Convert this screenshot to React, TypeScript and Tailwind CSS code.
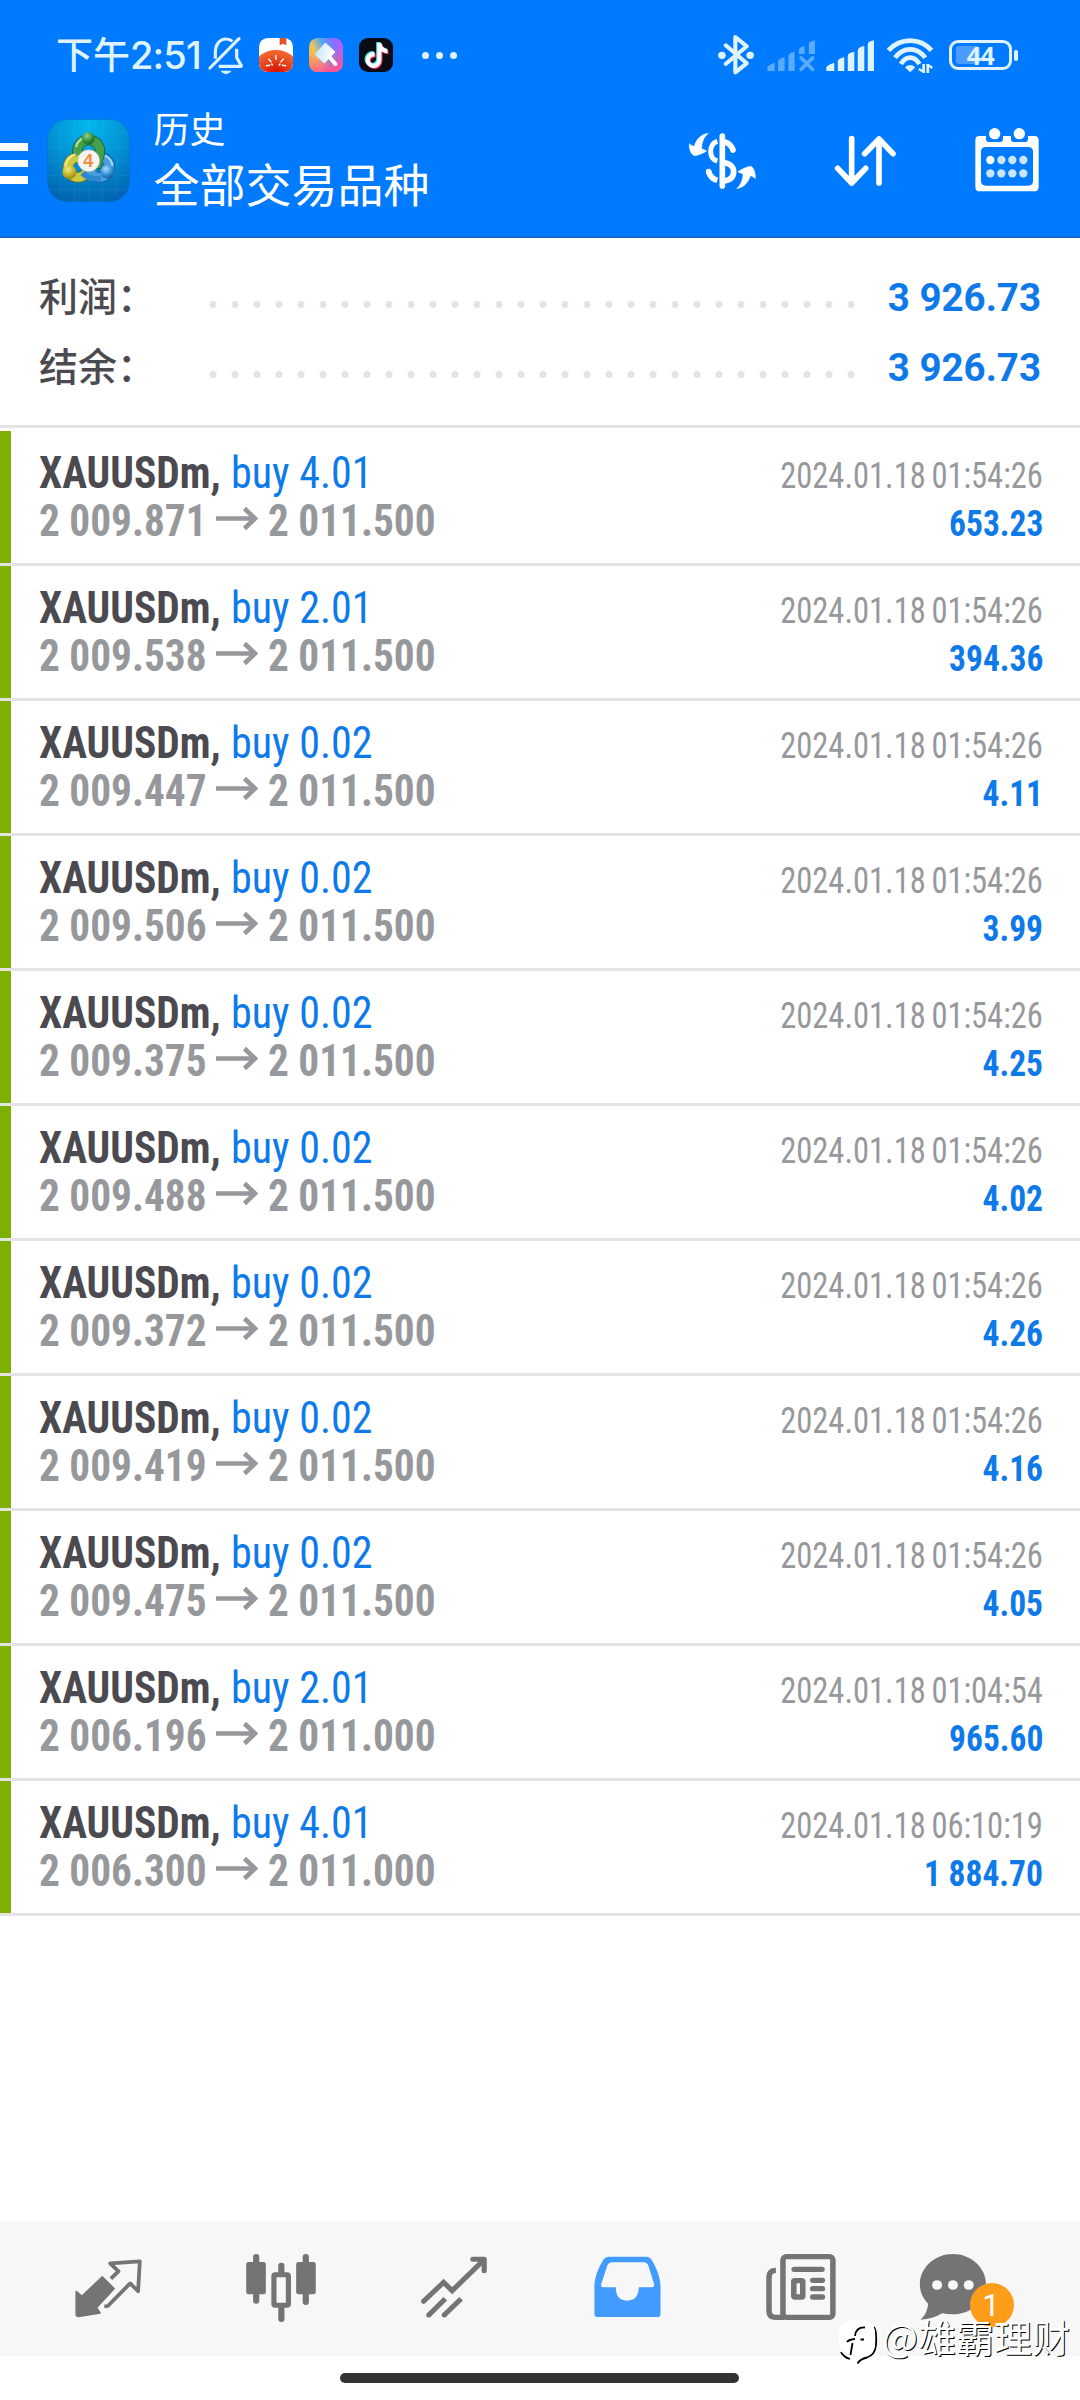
import { FaTiktok } from "react-icons/fa";

type Deal = { lots: string; open: string; close: string; time: string; profit: string };

const deals: Deal[] = [
  { lots: "4.01", open: "2 009.871", close: "2 011.500", time: "2024.01.18 01:54:26", profit: "653.23" },
  { lots: "2.01", open: "2 009.538", close: "2 011.500", time: "2024.01.18 01:54:26", profit: "394.36" },
  { lots: "0.02", open: "2 009.447", close: "2 011.500", time: "2024.01.18 01:54:26", profit: "4.11" },
  { lots: "0.02", open: "2 009.506", close: "2 011.500", time: "2024.01.18 01:54:26", profit: "3.99" },
  { lots: "0.02", open: "2 009.375", close: "2 011.500", time: "2024.01.18 01:54:26", profit: "4.25" },
  { lots: "0.02", open: "2 009.488", close: "2 011.500", time: "2024.01.18 01:54:26", profit: "4.02" },
  { lots: "0.02", open: "2 009.372", close: "2 011.500", time: "2024.01.18 01:54:26", profit: "4.26" },
  { lots: "0.02", open: "2 009.419", close: "2 011.500", time: "2024.01.18 01:54:26", profit: "4.16" },
  { lots: "0.02", open: "2 009.475", close: "2 011.500", time: "2024.01.18 01:54:26", profit: "4.05" },
  { lots: "2.01", open: "2 006.196", close: "2 011.000", time: "2024.01.18 01:04:54", profit: "965.60" },
  { lots: "4.01", open: "2 006.300", close: "2 011.000", time: "2024.01.18 06:10:19", profit: "1 884.70" },
];

const ICE = "#dff3ff";

function BellOff() {
  return (
    <svg className="ml-[8px] mt-[30px] h-[50px] w-[38px]" viewBox="22 15 114 150" fill="none" stroke={ICE} strokeWidth="9.5">
      <path d="M47 101V82C47 59 60 42 79 42C86 42 93 44 98 49" />
      <path d="M111 71V98L124 120Q127 124 122 124H57" />
      <path d="M118 41L31 129" strokeLinecap="round" />
      <path d="M62 137H96Q79 158 62 137Z" fill={ICE} stroke="none" />
    </svg>
  );
}

function TomatoApp() {
  return (
    <svg className="ml-[14px] mt-[38px] size-[34px]" viewBox="177 39 102 102">
      <defs>
        <clipPath id="tomatoClip"><rect x="177" y="39" width="102" height="102" rx="26" /></clipPath>
        <radialGradient id="tomatoFill" cx="0.5" cy="0.7" r="0.6">
          <stop offset="0" stopColor="#d80f04" />
          <stop offset="1" stopColor="#f0622a" />
        </radialGradient>
      </defs>
      <g clipPath="url(#tomatoClip)">
        <rect x="177" y="39" width="102" height="102" fill="#fff" />
        <ellipse cx="228" cy="122" rx="62" ry="47" fill="url(#tomatoFill)" />
        <path d="M239 39H259V61L249 56L239 61Z" fill="#e2502e" />
      </g>
      <g stroke="#fff" strokeWidth="4.5" strokeLinecap="round">
        <path d="M199 122L209 121M206 102L213 110M227 92L228 103M250 102L243 110M257 122L247 121M215 117L217 120M240 117L238 120" />
      </g>
    </svg>
  );
}

function BrushApp() {
  return (
    <svg className="ml-[16px] mt-[38px] size-[34px]" viewBox="327 39 102 102">
      <defs>
        <linearGradient id="brushBase" x1="0" y1="0.6" x2="1" y2="0.2">
          <stop offset="0" stopColor="#ffb12e" />
          <stop offset="0.22" stopColor="#e8c45c" />
          <stop offset="0.5" stopColor="#4aa8fb" />
          <stop offset="0.8" stopColor="#8a6cff" />
          <stop offset="1" stopColor="#c05cff" />
        </linearGradient>
        <linearGradient id="brushGlow" x1="0.4" y1="0.35" x2="0.6" y2="1">
          <stop offset="0" stopColor="#ff5aa0" stopOpacity="0" />
          <stop offset="1" stopColor="#ff4f94" />
        </linearGradient>
        <linearGradient id="brushHead" x1="0" y1="0" x2="1" y2="0.2">
          <stop offset="0" stopColor="#bfe3ff" />
          <stop offset="1" stopColor="#fff" />
        </linearGradient>
      </defs>
      <rect x="327" y="39" width="102" height="102" rx="26" fill="url(#brushBase)" />
      <rect x="327" y="39" width="102" height="102" rx="26" fill="url(#brushGlow)" />
      <path d="M376 54L405 81L373 114L345 88Z" fill="url(#brushHead)" stroke="url(#brushHead)" strokeWidth="3" strokeLinejoin="round" />
      <path d="M388 95L406 117" stroke="#fff" strokeWidth="12" strokeLinecap="round" />
    </svg>
  );
}

function TiktokApp() {
  return (
    <div className="relative ml-[16px] mt-[38px] size-[34px] rounded-[9px] bg-[#0b0b16]">
      <FaTiktok className="absolute left-[5px] top-[4px] h-[25px] w-[23px] text-[#2fe6e0]" />
      <FaTiktok className="absolute left-[7px] top-[6px] h-[25px] w-[23px] text-[#fb3357]" />
      <FaTiktok className="absolute left-[6px] top-[5px] h-[25px] w-[23px] text-white" />
    </div>
  );
}

function Bluetooth() {
  return (
    <svg className="mt-[30px] h-[50px] w-[40px]" viewBox="508 90 116 150" preserveAspectRatio="none">
      <path d="M539 136L600 190L567 217V111L600 139L539 192" fill="none" stroke={ICE} strokeWidth="12" strokeLinecap="round" strokeLinejoin="round" />
      <circle cx="528" cy="166" r="11" fill={ICE} />
      <circle cx="610" cy="166" r="11" fill={ICE} />
    </svg>
  );
}

function SignalOff() {
  return (
    <svg className="ml-[11px] mt-[30px] h-[50px] w-[50px]" viewBox="656 90 145 150" preserveAspectRatio="none" fill="#5aabff">
      <path d="M660 213V202Q660 196 681 188V213Z" />
      <path d="M691 213V184Q691 176 710 172V213Z" />
      <path d="M721 213V168Q721 158 739 155V213Z" />
      <path d="M751 162V152Q751 142 768 138V162Z" />
      <path d="M780 162V134Q780 124 798 121V162Z" />
      <path d="M758 174L791 208M791 174L758 208" stroke="#5aabff" strokeWidth="11" strokeLinecap="round" />
    </svg>
  );
}

function Signal() {
  return (
    <svg className="ml-[9px] mt-[30px] h-[50px] w-[50px]" viewBox="830 90 145 150" preserveAspectRatio="none" fill={ICE}>
      <path d="M834 213V202Q834 196 857 188V213Z" />
      <path d="M867 213V184Q867 176 886 172V213Z" />
      <path d="M896 213V168Q896 158 915 155V213Z" />
      <path d="M925 213V152Q925 142 944 138V213Z" />
      <path d="M954 213V134Q954 124 972 121V213Z" />
    </svg>
  );
}

function Wifi() {
  return (
    <svg className="ml-[11px] mt-[30px] h-[50px] w-[48px]" viewBox="1007 90 139 150" preserveAspectRatio="none" fill="none" stroke={ICE} strokeWidth="14">
      <path d="M1014 151Q1041 122 1077 122T1139 151" />
      <path d="M1033 173Q1052 148 1077 148T1121 173" />
      <path d="M1050 192Q1062 173 1077 173T1104 192" />
      <path d="M1062 202Q1077 188 1092 202L1077 217Z" fill={ICE} stroke="none" />
      <path d="M1116 192V219M1128 192V219" strokeWidth="8" />
      <path d="M1102 207L1113 214M1131 196L1141 204" strokeWidth="7" />
    </svg>
  );
}

function Battery() {
  return (
    <div className="ml-[15px] mt-[40px] flex">
      <div className="relative flex h-[30px] w-[63px] items-center rounded-[9px] border-[3px] border-[#dff3ff]">
        <div className="absolute left-[4px] top-[3px] h-[18px] w-[24px] rounded-[3px] bg-[#4a9dff]" />
        <span className="relative w-full text-center font-['Open_Sans'] text-[25px] font-bold leading-[24px] tracking-[-0.5px] text-[#dff3ff]">44</span>
      </div>
      <div className="ml-[2px] mt-[10px] h-[11px] w-[4px] rounded-[2px] bg-[#dff3ff]" />
    </div>
  );
}

function StatusBar() {
  return (
    <div className="flex h-[100px] items-start pl-[56px] pr-[62px]">
      <span className="font-['Noto_Sans_CJK_SC',sans-serif] text-[37px] font-medium leading-[106px] text-[#dff3ff]">下午</span>
      <span className="w-[69px] whitespace-nowrap font-['Inter',sans-serif] text-[38px] font-medium leading-[111px] tracking-[-0.8px] text-[#dff3ff]">2:51</span>
      <BellOff />
      <TomatoApp />
      <BrushApp />
      <TiktokApp />
      <div className="ml-[29px] mt-[52px] flex gap-[7.5px]">
        <div className="size-[6.5px] rounded-full bg-[#dff3ff]" />
        <div className="size-[6.5px] rounded-full bg-[#dff3ff]" />
        <div className="size-[6.5px] rounded-full bg-[#dff3ff]" />
      </div>
      <div className="ml-auto flex">
        <Bluetooth />
        <SignalOff />
        <Signal />
        <Wifi />
        <Battery />
      </div>
    </div>
  );
}

function AppLogo() {
  return (
    <svg className="ml-[19px] mt-[19px] size-[83px]" viewBox="50 28 249 249">
      <defs>
        <radialGradient id="logoBg" cx="0.5" cy="0.05" r="1">
          <stop offset="0" stopColor="#02b8ee" />
          <stop offset="0.5" stopColor="#0290d4" />
          <stop offset="1" stopColor="#0161b0" />
        </radialGradient>
        <radialGradient id="ballGreen" cx="0.4" cy="0.3" r="0.8"><stop offset="0" stopColor="#8fd287" /><stop offset="0.6" stopColor="#2d8a35" /><stop offset="1" stopColor="#165a20" /></radialGradient>
        <radialGradient id="ballYellow" cx="0.4" cy="0.3" r="0.8"><stop offset="0" stopColor="#f3ea86" /><stop offset="0.6" stopColor="#bfae22" /><stop offset="1" stopColor="#7d7410" /></radialGradient>
        <radialGradient id="ballBlue" cx="0.4" cy="0.3" r="0.8"><stop offset="0" stopColor="#a6dcff" /><stop offset="0.6" stopColor="#2c86cf" /><stop offset="1" stopColor="#0d4f93" /></radialGradient>
      </defs>
      <rect x="51" y="29" width="247" height="247" rx="60" fill="url(#logoBg)" stroke="#0a6cc8" strokeWidth="2" />
      <path d="M90 45V260M132 29V276M175 29V276M217 29V276M260 45V260M51 70H298M51 113H298M51 155H298M51 198H298M51 240H298" stroke="#fff" strokeOpacity="0.09" strokeWidth="2" />
      <g fill="none">
        <circle cx="143" cy="173" r="30" stroke="#6d7420" strokeWidth="32" />
        <circle cx="143" cy="173" r="30" stroke="#cdc93f" strokeWidth="27" />
        <circle cx="208" cy="173" r="30" stroke="#0d5a9c" strokeWidth="32" />
        <circle cx="208" cy="173" r="30" stroke="#459fdf" strokeWidth="27" />
        <path d="M143 136A34 34 0 1 1 207 136L196 176" stroke="#1d5f2a" strokeWidth="31" />
        <path d="M143 136A34 34 0 1 1 207 136L197 173" stroke="#46a04a" strokeWidth="26" />
        <path d="M137 112C140 98 150 88 162 85" stroke="#a9dba0" strokeWidth="7" />
        <path d="M105 170C108 152 120 138 136 134" stroke="#ece98e" strokeWidth="7" />
        <path d="M224 138C238 144 246 158 246 168" stroke="#a7d8f6" strokeWidth="6" />
        <path d="M156 190C172 206 192 210 212 205" stroke="#2f87cf" strokeWidth="16" />
      </g>
      <circle cx="174" cy="86" r="19" fill="url(#ballGreen)" />
      <circle cx="117" cy="187" r="21" fill="url(#ballYellow)" />
      <circle cx="231" cy="186" r="21" fill="url(#ballBlue)" />
      <circle cx="175" cy="153" r="33" fill="#f4f4f2" stroke="#a9b3a0" strokeWidth="2" />
      <text x="174" y="172" textAnchor="middle" className="font-['Liberation_Sans'] text-[54px] font-bold" fill="#f08c3c">4</text>
    </svg>
  );
}

function CurrencyIcon() {
  return (
    <svg className="mt-[20px] h-[90px] w-[71px]" viewBox="20 0 213 270" fill="none" stroke="#fff">
      <path d="M126 48V198" strokeWidth="17" strokeLinecap="round" />
      <path d="M111 64C97 68 91 80 91 95S98 119 111 123" strokeWidth="15" />
      <path d="M133 66C145 69 154 78 158 90" strokeWidth="17" strokeLinecap="round" />
      <path d="M111 181C98 178 90 170 85 156" strokeWidth="17" />
      <circle cx="85" cy="155" r="8.5" fill="#fff" stroke="none" />
      <path d="M131 128C149 130 160 140 160 155S149 180 131 183" strokeWidth="17" />
      <path d="M84 40C64 42 48 56 42 79C37 78 31 75 27 71C26 85 30 98 38 105Q43 109 50 106C60 103 70 99 79 93C74 90 70 88 64 86C64 68 70 52 84 40Z" fill="#fff" strokeWidth="1.5" />
      <path d="M169 206C190 202 204 188 210 167C216 168 221 171 225 176C226 162 222 149 216 142Q211 137 204 140C192 143 182 149 173 155C178 158 182 160 188 161C188 178 182 194 169 206Z" fill="#fff" strokeWidth="1.5" />
    </svg>
  );
}

function SortIcon() {
  return (
    <svg className="ml-[75px] mt-[20px] h-[90px] w-[65px]" viewBox="458 0 195 270" fill="none" stroke="#fff" strokeWidth="17" strokeLinecap="round" strokeLinejoin="round">
      <path d="M514 56V189M472 145L514 189L556 145" />
      <path d="M596 189V57M553 101L596 57L638 101" />
    </svg>
  );
}

function CalendarIcon() {
  const cols = [930, 963, 996, 1029];
  return (
    <svg className="ml-[76px] mt-[20px] h-[90px] w-[66px]" viewBox="881 0 198 270">
      <path fillRule="evenodd" fill="#fff" d="M897 48H917V56Q917 66 927 66H958Q968 66 968 56V48H992V56Q992 66 1002 66H1033Q1043 66 1043 56V48H1062Q1075 48 1075 61V200Q1075 214 1061 214H898Q885 214 885 200V61Q885 48 897 48ZM917 81Q902 81 902 95V183Q902 197 917 197H1043Q1058 197 1058 183V95Q1058 81 1043 81Z" />
      <circle cx="943" cy="41" r="17" fill="#fff" />
      <circle cx="1017" cy="41" r="17" fill="#fff" />
      {cols.map((x, i) => (
        <g key={x}>
          <circle cx={x} cy="120" r="12.5" fill={i === 0 ? "#fff" : "#cce5ff"} />
          <circle cx={x} cy="160" r="12.5" fill="#cce5ff" />
        </g>
      ))}
    </svg>
  );
}

function Header() {
  return (
    <header className="h-[238px] border-b-2 border-[#1069cf] bg-[#007aff]">
      <StatusBar />
      <div className="flex h-[136px] items-start pr-[40px]">
        <div className="mt-[43px] flex w-[27.5px] flex-col gap-[9px]">
          <div className="h-[7.5px] bg-white" />
          <div className="h-[7.5px] bg-white" />
          <div className="h-[7.5px] bg-white" />
        </div>
        <AppLogo />
        <div className="ml-[24px] mt-[7px] font-['Noto_Sans_CJK_SC',sans-serif] text-white">
          <div className="text-[36px] leading-[40px]">历史</div>
          <div className="text-[46px] leading-[71px]">全部交易品种</div>
        </div>
        <div className="ml-auto flex">
          <CurrencyIcon />
          <SortIcon />
          <CalendarIcon />
        </div>
      </div>
    </header>
  );
}

function SummaryRow({ label, value }: { label: string; value: string }) {
  return (
    <div className="flex h-[70px] items-start">
      <span className="w-[163px] whitespace-nowrap font-['Noto_Sans_CJK_SC',sans-serif] text-[39px] font-medium leading-[62px] text-[#4b4a50]">{label}</span>
      <div className="mt-[38px] h-[7px] w-[660px] bg-[radial-gradient(circle,#e3e3e3_3.2px,transparent_3.9px)] bg-[length:22px_7px]" />
      <span className="ml-auto whitespace-nowrap text-[38.5px] font-bold leading-[70px] text-[#0e7aea]">{value}</span>
    </div>
  );
}

function DealRow({ deal }: { deal: Deal }) {
  return (
    <div className="border-b-[3px] border-[#e4e4e4]">
      <div className="flex h-[132px] justify-between border-l-[11px] border-[#7db000] pl-[27.5px] pr-[37px] [font-stretch:75%]">
        <div className="pt-[18px] text-[44px] leading-[48px]">
          <div className="flex">
            <div className="w-[192px]">
              <span className="inline-block origin-left scale-x-[0.942] whitespace-nowrap font-bold text-[#4b4a50]">XAUUSDm,</span>
            </div>
            <span className="inline-block origin-left scale-x-[0.955] whitespace-nowrap text-[#0e7aea] [font-weight:440]">buy {deal.lots}</span>
          </div>
          <div className="flex font-bold text-[#97989b]">
            <div className="w-[177px]">
              <span className="inline-block origin-left scale-x-[0.938] whitespace-nowrap">{deal.open}</span>
            </div>
            <svg className="mr-[9px] h-[48px] w-[43px]" viewBox="0 0 43 48" fill="none" stroke="#97989b" strokeWidth="4.6">
              <path d="M0 21.5H39M28.5 11.5L39 21.5L28.5 31.5" />
            </svg>
            <span className="inline-block origin-left scale-x-[0.938] whitespace-nowrap">{deal.close}</span>
          </div>
        </div>
        <div className="flex flex-col items-end pt-[21px] text-[36px] leading-[48px]">
          <span className="inline-block origin-right scale-x-[0.903] whitespace-nowrap text-[#97989b] [font-weight:430] [word-spacing:-2px]">{deal.time}</span>
          <span className="inline-block origin-right scale-x-[0.93] whitespace-nowrap font-bold text-[#0e7aea]">{deal.profit}</span>
        </div>
      </div>
    </div>
  );
}

const tab = "h-[135px] w-[180px]";

function BottomNav() {
  return (
    <nav className="relative flex h-[135px] bg-[#f7f7f7]">
      <svg className={tab} viewBox="0 63 522.7 405" preserveAspectRatio="none">
        <path d="M297 230L332 266L281 323L291 339L228 350Q221 350 221 343V274L238 288Z" fill="#747474" stroke="#747474" strokeWidth="4" strokeLinejoin="round" />
        <path d="M322 236L344 214L320 190L406 184L401 274L378 250L313 318L303 319" fill="none" stroke="#747474" strokeWidth="11" strokeLinejoin="round" />
      </svg>
      <svg className={tab} viewBox="522.7 63 522.7 405" preserveAspectRatio="none" fill="none" stroke="#747474" strokeWidth="18" strokeLinecap="round">
        <path d="M744 171V302M888 171V306M817 197V216M817 324V357" />
        <rect x="715" y="186" width="57" height="97" rx="7" fill="#747474" stroke="none" />
        <rect x="860" y="186" width="57" height="97" rx="7" fill="#747474" stroke="none" />
        <rect x="795.5" y="224" width="42" height="92" rx="4" strokeWidth="15" />
      </svg>
      <svg className={tab} viewBox="1045.3 63 522.7 405" preserveAspectRatio="none" fill="none" stroke="#747474" strokeWidth="15" strokeLinecap="round">
        <path d="M1230 304L1288 247L1313 272L1404 181" />
        <path d="M1373 178H1406V212" strokeWidth="15" strokeLinejoin="round" />
        <path d="M1245 345L1293 296" strokeLinecap="butt" />
        <path d="M1290 345L1339 296" strokeLinecap="butt" />
        <path d="M1245 345h.1M1290 345h.1" />
      </svg>
      <svg className={tab} viewBox="0 63 522.7 405" preserveAspectRatio="none">
        <path fillRule="evenodd" fill="#429bff" d="M198 170H310Q318 170 323 178C340 205 350 235 350 262V341Q350 351 340 351H168Q158 351 158 341V262C158 235 168 205 185 178Q190 170 198 170ZM209 187Q199 187 195 198L178 251Q175 262 185 262H220Q220 302 253 302T287 262H323Q334 262 331 251L315 198Q311 187 301 187Z" />
      </svg>
      <svg className={tab} viewBox="522.7 63 522.7 405" preserveAspectRatio="none" fill="none" stroke="#747474" strokeWidth="16">
        <rect x="705.5" y="170" width="145" height="182" rx="10" />
        <path d="M685 211Q665 211 665 232V332Q665 352 685 352H710" />
        <path d="M738 208H819M792 241H820M792 266H820M792 291H820" strokeWidth="16" strokeLinecap="round" />
        <rect x="737" y="242" width="26" height="49" rx="3" />
      </svg>
      <svg className={tab} viewBox="1045.3 63 522.7 405" preserveAspectRatio="none">
        <path fill="#747474" d="M1199 162C1252 162 1295 203 1295 253S1252 343 1199 343Q1182 343 1168 340Q1140 357 1105 359Q1125 340 1127 311C1112 295 1103 275 1103 253C1103 203 1146 162 1199 162Z" />
        <circle cx="1153" cy="255" r="14.5" fill="#f7f7f7" />
        <circle cx="1199" cy="255" r="14.5" fill="#f7f7f7" />
        <circle cx="1245" cy="255" r="14.5" fill="#f7f7f7" />
      </svg>
      <div className="absolute left-[970px] top-[62px] flex size-[44px] items-center justify-center rounded-full bg-[#ff9d1b] text-[31px] leading-[44px] text-white">
        <span className="relative -left-px top-px">1</span>
      </div>
    </nav>
  );
}

function Watermark() {
  return (
    <div className="absolute left-[838px] top-[2313px] flex items-start text-white">
      <svg className="mt-[6px] h-[50px] w-[44px]" viewBox="0 0 44 50" fill="none">
        <path d="M36 8Q39 12 38 26Q37 36 29 38.5Q22 40 19.5 44.5M3 33Q6 38.5 12 40" stroke="#000" strokeWidth="1.8" />
        <rect x="1" y="1.5" width="36" height="36" rx="12" fill="#fff" />
        <path d="M17.5 43Q19 39 28 37L10 37Q16 39 17.5 43Z" fill="#fff" />
        <path d="M27 8.5Q18 8 17 17M9 23Q11 20.5 17 20M22.5 20.5H26M14.5 24L12.5 36" stroke="#000" strokeWidth="1.8" />
      </svg>
      <span className="whitespace-nowrap font-['Noto_Sans_CJK_SC',sans-serif] text-[38px] leading-[46px] [text-shadow:1px_1px_0.5px_#000]">@雄霸理财</span>
    </div>
  );
}

export default function App() {
  return (
    <div className="relative flex h-[2400px] w-[1080px] flex-col overflow-hidden bg-white font-['Roboto',sans-serif]">
      <Header />
      <section className="h-[190px] border-b-[3px] border-[#e4e4e4] pl-[39px] pr-[39px] pt-[25px]">
        <SummaryRow label="利润：" value="3 926.73" />
        <SummaryRow label="结余：" value="3 926.73" />
      </section>
      <main className="flex-1 pt-[3px]">
        {deals.map((d, i) => (
          <DealRow key={i} deal={d} />
        ))}
      </main>
      <BottomNav />
      <div className="flex h-[44px] pl-[340px] pt-[17px]">
        <div className="h-[10px] w-[399px] rounded-full bg-[#333]" />
      </div>
      <Watermark />
    </div>
  );
}
